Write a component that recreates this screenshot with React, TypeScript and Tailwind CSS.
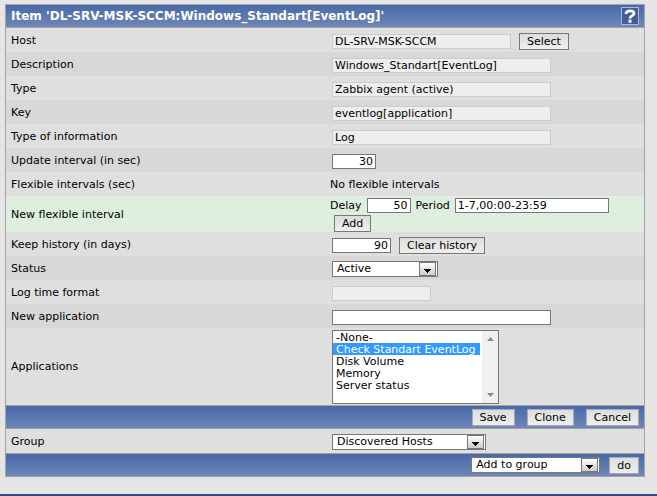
import { useState, type ReactNode } from "react";
import clsx from "clsx";

const APPLICATIONS = [
  "-None-",
  "Check Standart EventLog",
  "Disk Volume",
  "Memory",
  "Server status",
];

const fieldBase = "h-[15px] border px-[2px] text-[11px] leading-[13px] outline-none";
const fieldReadonly = "border-[#cccccc] bg-[#eeeeee]";
const fieldEditable = "border-[#777777] bg-white";

interface FieldProps {
  id: string;
  value?: string;
  readOnly?: boolean;
  className?: string;
}

function Field({ id, value = "", readOnly, className }: FieldProps) {
  return (
    <input
      id={id}
      type="text"
      defaultValue={value}
      readOnly={readOnly}
      className={clsx(fieldBase, readOnly ? fieldReadonly : fieldEditable, className)}
    />
  );
}

interface ButtonProps {
  children: ReactNode;
  className?: string;
}

function Button({ children, className }: ButtonProps) {
  return (
    <button
      type="button"
      className={clsx(
        "h-[17px] border bg-linear-to-b from-[#dddddd] to-[#eeeeee] px-[7px] text-[11px] leading-[15px] hover:to-white",
        className
      )}
    >
      {children}
    </button>
  );
}

interface DropdownProps {
  id: string;
  options: string[];
  label?: string;
  className?: string;
}

function Dropdown({ id, options, label, className }: DropdownProps) {
  return (
    <div className={clsx("relative h-4 border border-[#777777] bg-white", className)}>
      <select
        id={id}
        aria-label={label}
        className="block h-full w-full appearance-none bg-transparent pr-5 pl-1 text-[11px] leading-[14px] outline-none"
      >
        {options.map((o) => (
          <option key={o}>{o}</option>
        ))}
      </select>
      <span className="pointer-events-none absolute top-0 right-px flex h-[14px] w-[17px] items-end justify-center border border-[#777777] bg-linear-to-b from-white to-[#cccccc] pb-[2px]">
        <svg width="7" height="4" viewBox="0 0 7 4" shapeRendering="crispEdges">
          <path d="M0 0h7v1H6v1H5v1H4v1H3V3H2V2H1V1H0z" fill="#000" />
        </svg>
      </span>
    </div>
  );
}

interface RowProps {
  label: string;
  htmlFor?: string;
  className?: string;
  children: ReactNode;
}

function Row({ label, htmlFor, className, children }: RowProps) {
  return (
    <div className={clsx("flex min-h-6 items-center pt-[2px]", className)}>
      <label htmlFor={htmlFor} className="w-1/2 px-[5px]">
        {label}
      </label>
      <div className="flex w-1/2 items-center px-[7px]">{children}</div>
    </div>
  );
}

const light = "bg-[#dfdfdf]";
const dark = "bg-[#d8d8d8]";
const barGradient = "bg-linear-to-b from-[#4869a9] to-[#6e87b7]";

export default function App() {
  const [selected, setSelected] = useState(["Check Standart EventLog"]);

  return (
    <div className="flex min-h-screen flex-col justify-between bg-[#e5e5e5] font-['DejaVu_Sans',Verdana,sans-serif] text-[11px] leading-[14px] text-black">
      <form className="mt-1 mr-3 ml-[5px] border border-[#a3a3a3]">
        {/* Title bar */}
        <div className={clsx("flex h-[23px] items-center justify-between border-b border-[#a3a3a3] px-[5px]", barGradient)}>
          <h1 className="text-[12px] font-bold text-white">
            Item 'DL-SRV-MSK-SCCM:Windows_Standart[EventLog]'
          </h1>
          <button
            type="button"
            aria-label="Help"
            className="flex h-[18px] w-[18px] items-center justify-center border border-[#aab8dc] bg-[#455c98]"
          >
            <svg width="12" height="14" viewBox="0 0 12 14">
              <path d="M2 5C2 2.700 3.600 1.800 6 1.800s4 .8 4 2.700C10 6.800 6 6.500 6 9.500" fill="none" stroke="#fff" strokeWidth="2.800" />
              <path d="M4.500 10.700h3v3h-3z" fill="#fff" />
            </svg>
          </button>
        </div>

        <Row label="Host" htmlFor="host" className={light}>
          <Field id="host" value="DL-SRV-MSK-SCCM" readOnly className="w-[179px]" />
          <Button className="ml-2 border-[#777777]">Select</Button>
        </Row>
        <Row label="Description" htmlFor="description" className={dark}>
          <Field id="description" value="Windows_Standart[EventLog]" readOnly className="w-[219px]" />
        </Row>
        <Row label="Type" htmlFor="type" className={light}>
          <Field id="type" value="Zabbix agent (active)" readOnly className="w-[219px]" />
        </Row>
        <Row label="Key" htmlFor="key" className={dark}>
          <Field id="key" value="eventlog[application]" readOnly className="w-[219px]" />
        </Row>
        <Row label="Type of information" htmlFor="info" className={light}>
          <Field id="info" value="Log" readOnly className="w-[219px]" />
        </Row>
        <Row label="Update interval (in sec)" htmlFor="update" className={dark}>
          <Field id="update" value="30" className="w-11 text-right" />
        </Row>
        <div className={clsx("flex min-h-6 items-center pt-[2px]", light)}>
          <span className="w-1/2 px-[5px]">Flexible intervals (sec)</span>
          <span className="w-1/2 px-[5px]">No flexible intervals</span>
        </div>
        <div className="flex min-h-9 items-center bg-[#dfefdf] pt-[2px]">
          <span className="w-1/2 px-[5px]">New flexible interval</span>
          <div className="w-1/2 px-[5px]">
            <div className="flex items-center">
              <label htmlFor="delay" className="mr-[5px]">Delay</label>
              <Field id="delay" value="50" className="w-11 text-right" />
              <label htmlFor="period" className="mx-[5px]">Period</label>
              <Field id="period" value="1-7,00:00-23:59" className="w-[154px]" />
            </div>
            <Button className="mt-[2px] ml-1 block border-[#777777]">Add</Button>
          </div>
        </div>
        <Row label="Keep history (in days)" htmlFor="history" className={light}>
          <Field id="history" value="90" className="w-[59px] text-right" />
          <Button className="ml-2 border-[#777777]">Clear history</Button>
        </Row>
        <Row label="Status" htmlFor="status" className={dark}>
          <Dropdown id="status" options={["Active", "Disabled", "Not supported"]} className="w-[106px]" />
        </Row>
        <Row label="Log time format" htmlFor="logtime" className={light}>
          <Field id="logtime" readOnly className="w-[99px]" />
        </Row>
        <Row label="New application" htmlFor="newapp" className={dark}>
          <Field id="newapp" className="w-[219px]" />
        </Row>
        <Row label="Applications" htmlFor="apps" className={clsx("pb-px", light)}>
          <div className="flex h-[74px] w-[167px] border border-[#777777] bg-white">
            <select
              id="apps"
              multiple
              size={6}
              value={selected}
              onChange={(e) => setSelected(Array.from(e.target.selectedOptions, (o) => o.value))}
              className="h-full min-w-0 flex-1 appearance-none overflow-hidden bg-white p-0 text-[11px] leading-[12px] outline-none"
            >
              {APPLICATIONS.map((name) => (
                <option
                  key={name}
                  className="h-3 min-h-3 px-[3px] py-0 leading-[12px] checked:bg-linear-to-r checked:from-[#3399ff] checked:to-[#3399ff] checked:[-webkit-text-fill-color:#fff]"
                >
                  {name}
                </option>
              ))}
            </select>
            <div className="ml-[2px] flex w-4 flex-col items-center justify-between bg-[#f0f0f0] py-[6px]">
              <svg width="7" height="4" viewBox="0 0 7 4">
                <path d="M0 4L3.500 0L7 4z" fill="#888" />
              </svg>
              <svg width="7" height="4" viewBox="0 0 7 4">
                <path d="M0 0L3.500 4L7 0z" fill="#888" />
              </svg>
            </div>
          </div>
        </Row>

        <div className={clsx("flex h-6 items-center justify-end gap-3 border-y border-[#a3a3a3] pr-[5px]", barGradient)}>
          <Button className="border-[#aaaaaa]">Save</Button>
          <Button className="border-[#aaaaaa]">Clone</Button>
          <Button className="border-[#aaaaaa]">Cancel</Button>
        </div>

        <Row label="Group" htmlFor="group" className={light}>
          <Dropdown id="group" options={["Discovered Hosts", "Linux servers", "Windows servers"]} className="w-[154px]" />
        </Row>

        <div className={clsx("flex h-[23px] items-center justify-end border-t border-[#a3a3a3] pr-[5px]", barGradient)}>
          <Dropdown
            id="action"
            label="Group action"
            options={["Add to group", "Update in group", "Delete from group"]}
            className="mr-[9px] w-[129px]"
          />
          <Button className="border-[#aaaaaa]">do</Button>
        </div>
      </form>

      <div className="h-[2px] bg-[#35487f]" />
    </div>
  );
}
